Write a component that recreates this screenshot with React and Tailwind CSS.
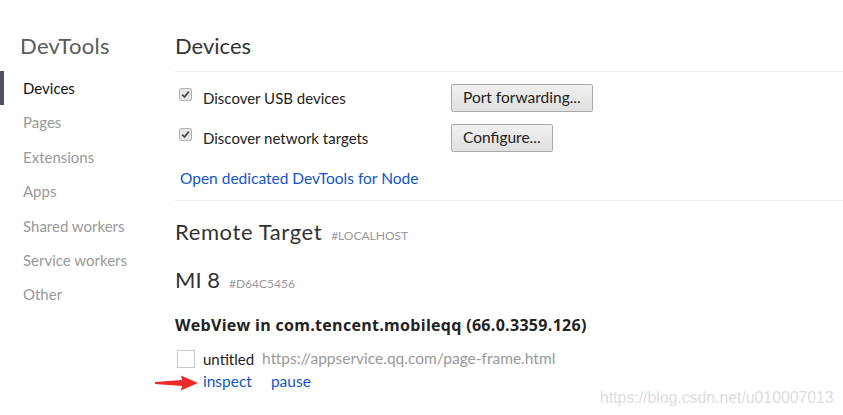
import React from 'react';

const navItems = ['Devices', 'Pages', 'Extensions', 'Apps', 'Shared workers', 'Service workers', 'Other'];

const CheckedBox = () => (
  <span className="w-[13px] h-[13px] mt-[-7px] mr-[11px] ml-[4px] flex items-center justify-center rounded-[2px] border border-[#b5b5b5] bg-[#e6e6e6]">
    <svg width="9" height="9" viewBox="0 0 9 9">
      <path d="M1.2 4.6 L3.5 7 L7.8 1.6" fill="none" stroke="#4a4a4a" strokeWidth="1.8" />
    </svg>
  </span>
);

const Button = ({ children }) => (
  <button className="h-[28px] px-[11px] text-[15.5px] text-[#222] border border-[#a9a9a9] rounded-[2px] bg-gradient-to-b from-[#f0f0f0] to-[#e0e0e0] leading-none">
    {children}
  </button>
);

const App = () => {
  return (
    <div className="relative w-[843px] h-[415px] bg-white overflow-hidden flex font-['Lato',sans-serif]">
      {/* sidebar */}
      <div className="w-[175px] shrink-0 pt-[32px]">
        <div className="pl-[20px] text-[22px] tracking-[0.3px] leading-[28px] text-[#5a5a5a]">DevTools</div>
        <div className="mt-[11px]">
          {navItems.map((item, i) => (
            <div
              key={item}
              className={
                i === 0
                  ? 'h-[34.4px] leading-[34.4px] pl-[19px] border-l-4 border-[#4b5362] text-[15px] text-[#111]'
                  : 'h-[34.4px] leading-[34.4px] pl-[23px] text-[15px] text-[#999]'
              }
            >
              {item}
            </div>
          ))}
        </div>
      </div>

      {/* main */}
      <div className="flex-1 pt-[32px]">
        <div className="text-[22px] leading-[28px] text-[#333]">Devices</div>
        <div className="mt-[11px] h-px bg-[#ececec]" />
        <div className="mt-[12px] flex flex-col gap-[12px]">
          <div className="flex items-center h-[28px]">
            <CheckedBox />
            <span className="w-[248px] pt-[1px] text-[15px] text-[#222]">Discover USB devices</span>
            <Button>Port forwarding...</Button>
          </div>
          <div className="flex items-center h-[28px]">
            <CheckedBox />
            <span className="w-[248px] pt-[1px] text-[15px] text-[#222]">Discover network targets</span>
            <Button>Configure...</Button>
          </div>
        </div>
        <div className="mt-[16px] pl-[5px] text-[15.5px] leading-[20px] text-[#1155cc]">Open dedicated DevTools for Node</div>
        <div className="mt-[12px] h-px bg-[#ececec]" />

        <div className="mt-[17px] flex items-baseline gap-[9px] leading-[28px]">
          <span className="text-[22px] tracking-[0.6px] text-[#333]">Remote Target</span>
          <span className="text-[12px] text-[#999] uppercase">#localhost</span>
        </div>
        <div className="mt-[16px] flex items-baseline gap-[9px] leading-[28px]">
          <span className="text-[22px] text-[#333]">MI 8</span>
          <span className="text-[12px] text-[#999] uppercase">#D64C5456</span>
        </div>
        <div className="mt-[17px] font-['Open_Sans',sans-serif] text-[16px] tracking-[0.3px] leading-[20px] font-bold text-[#222]">
          WebView in com.tencent.mobileqq (66.0.3359.126)
        </div>
        <div className="mt-[14px] flex items-center h-[20px]">
          <span className="w-[18px] h-[18px] ml-[2px] mr-[8px] border border-[#c8c8c8]" />
          <span className="text-[15px] text-[#222]">untitled</span>
          <span className="ml-[8px] text-[15.5px] text-[#999]">https://appservice.qq.com/page-frame.html</span>
        </div>
        <div className="pl-[28px] flex gap-[19px] text-[15.5px] leading-[24px] text-[#1155cc]">
          <span>inspect</span>
          <span>pause</span>
        </div>
      </div>

      {/* annotation arrow */}
      <svg className="absolute left-[155px] top-[375px]" width="44" height="16" viewBox="0 0 44 16">
        <path d="M0 7 L27 5 L26 0.5 L43 8 L26 15.5 L27 11 L0 9 Z" fill="#ee2a2a" />
      </svg>

      {/* watermark */}
      <div className="absolute left-[600px] top-[386px] text-[15.8px] text-[#dcdcdc] font-['Liberation_Sans',sans-serif]">
        https://blog.csdn.net/u010007013
      </div>
    </div>
  );
};

export default App;
